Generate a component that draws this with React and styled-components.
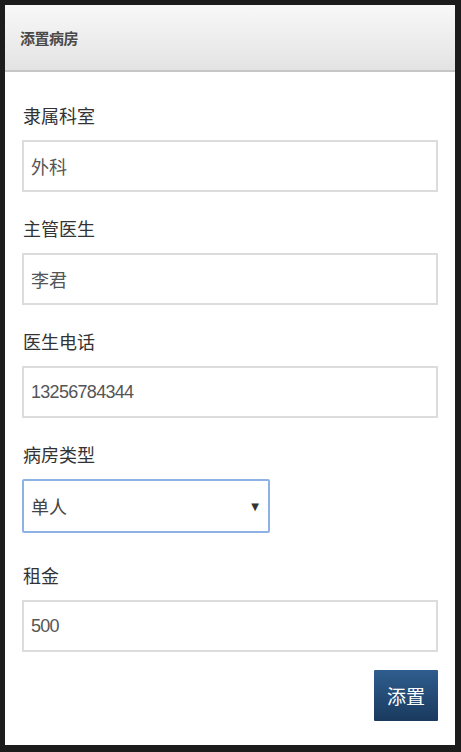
import React from "react";
import styled, { createGlobalStyle } from "styled-components";

const Global = createGlobalStyle`
  html, body { margin: 0; padding: 0; background: #1c1c1c; }
  body { font-family: "Noto Sans CJK SC", "Liberation Sans", sans-serif; }
  * { box-sizing: border-box; }
`;

const Frame = styled.div`
  width: 461px;
  height: 752px;
  padding: 5px 6px 7px 5px;
  background: #1c1c1c;
`;

const Panel = styled.div`
  width: 100%;
  height: 100%;
  background: #fff;
  display: flex;
  flex-direction: column;
`;

const Header = styled.div`
  height: 67px;
  flex: none;
  display: flex;
  align-items: center;
  padding-left: 15px;
  background: linear-gradient(#f8f8f8, #e3e3e3);
  border-bottom: 2px solid #c6c6c6;
  font-size: 15px;
  font-weight: 700;
  color: #4a4a4a;
  letter-spacing: -0.5px;
`;

const Form = styled.div`
  padding: 29px 17px 0 17px;
  display: flex;
  flex-direction: column;
`;

const Group = styled.div`
  display: flex;
  flex-direction: column;
  margin-bottom: ${(p) => (p.$extra ? "28px" : "22px")};
`;

const Label = styled.div`
  font-size: 18px;
  line-height: 28px;
  color: #333;
  margin-bottom: 11px;
  padding-left: 1px;
`;

const Input = styled.div`
  height: 52px;
  border: 2px solid #dcdcdc;
  display: flex;
  align-items: center;
  padding-left: 7px;
  font-size: 18px;
  color: #555;
  font-family: ${(p) => (p.$num ? '"Liberation Sans", sans-serif' : '"Noto Sans CJK SC", sans-serif')};
  letter-spacing: ${(p) => (p.$num ? "-0.7px" : "0")};
`;

const Select = styled.div`
  width: 248px;
  height: 54px;
  border: 2px solid #8fb2e6;
  border-radius: 2px;
  display: flex;
  align-items: center;
  justify-content: space-between;
  padding: 0 9px 0 7px;
  font-size: 18px;
  color: #444;
`;

const Arrow = styled.span`
  font-size: 10px;
  color: #333;
  font-family: "DejaVu Sans", sans-serif;
`;

const Footer = styled.div`
  display: flex;
  justify-content: flex-end;
  margin-top: -4px;
`;

const Button = styled.div`
  width: 64px;
  height: 51px;
  display: flex;
  align-items: center;
  justify-content: center;
  background: linear-gradient(#2f5d8e, #1a3a5e);
  color: #fff;
  font-size: 19px;
  border-radius: 1px;
`;

export default function App() {
  return (
    <>
      <Global />
      <Frame>
        <Panel>
          <Header>添置病房</Header>
          <Form>
            <Group>
              <Label>隶属科室</Label>
              <Input>外科</Input>
            </Group>
            <Group>
              <Label>主管医生</Label>
              <Input>李君</Input>
            </Group>
            <Group>
              <Label>医生电话</Label>
              <Input $num>13256784344</Input>
            </Group>
            <Group $extra>
              <Label>病房类型</Label>
              <Select>
                <span>单人</span>
                <Arrow>▼</Arrow>
              </Select>
            </Group>
            <Group>
              <Label>租金</Label>
              <Input $num>500</Input>
            </Group>
            <Footer>
              <Button>添置</Button>
            </Footer>
          </Form>
        </Panel>
      </Frame>
    </>
  );
}
